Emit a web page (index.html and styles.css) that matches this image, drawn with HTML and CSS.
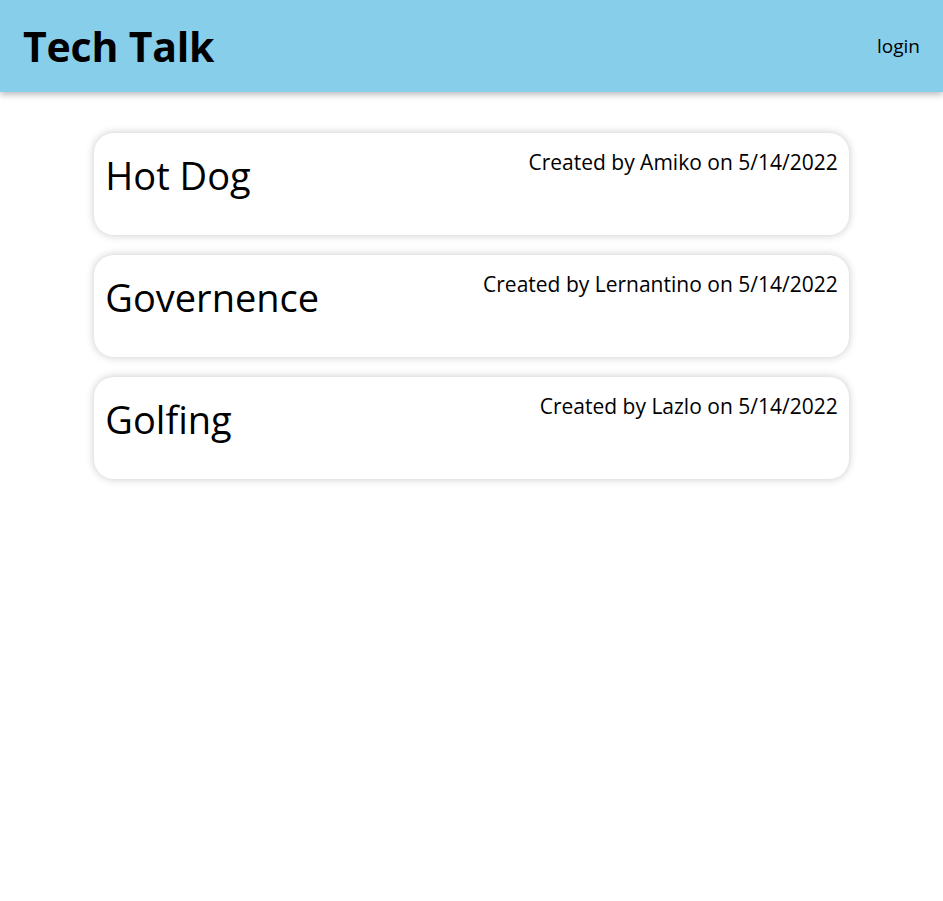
FILE: index.html
```html
<!DOCTYPE html>
<html>
<head>
<meta charset="utf-8">
<link rel="stylesheet" href="styles.css">
</head>
<body>
<header class="topbar">
  <h1 class="brand">Tech Talk</h1>
  <a class="login" href="#">login</a>
</header>
<main class="posts">
  <article class="post">
    <h2 class="post-title">Hot Dog</h2>
    <p class="post-meta">Created by Amiko on 5/14/2022</p>
  </article>
  <article class="post">
    <h2 class="post-title">Governence</h2>
    <p class="post-meta">Created by Lernantino on 5/14/2022</p>
  </article>
  <article class="post">
    <h2 class="post-title">Golfing</h2>
    <p class="post-meta">Created by Lazlo on 5/14/2022</p>
  </article>
</main>
</body>
</html>
```
FILE: styles.css
```css
* { box-sizing: border-box; }
html, body { min-height: 100%; }
body {
  margin: 0;
  font-family: "Open Sans", "Noto Sans", sans-serif;
  color: #000;
  background: #fff;
}
.topbar {
  height: 92px;
  background: #87ceeb;
  display: flex;
  align-items: center;
  justify-content: space-between;
  padding: 0 23px;
  box-shadow: 0 3px 6px rgba(0,0,0,0.25);
}
.brand {
  margin: 0;
  font-size: 41px;
  font-weight: 700;
  letter-spacing: -0.2px;
}
.login {
  color: #000;
  text-decoration: none;
  font-size: 19px;
}
.posts {
  width: 80%;
  margin: 41px auto 0;
  padding-bottom: 40px;
  display: flex;
  flex-direction: column;
  gap: 20px;
}
.post {
  height: 102px;
  background: #fff;
  border-radius: 20px;
  box-shadow: 0 0 8px rgba(0,0,0,0.22);
  padding: 13px 11px;
  display: flex;
  justify-content: space-between;
  align-items: flex-start;
}
.post-title {
  margin: 7px 0 0;
  font-size: 38px;
  font-weight: 400;
  line-height: 1.2;
}
.post-meta {
  margin: 3px 0 0;
  font-size: 21px;
  line-height: 1.3;
  letter-spacing: 0;
}
```
